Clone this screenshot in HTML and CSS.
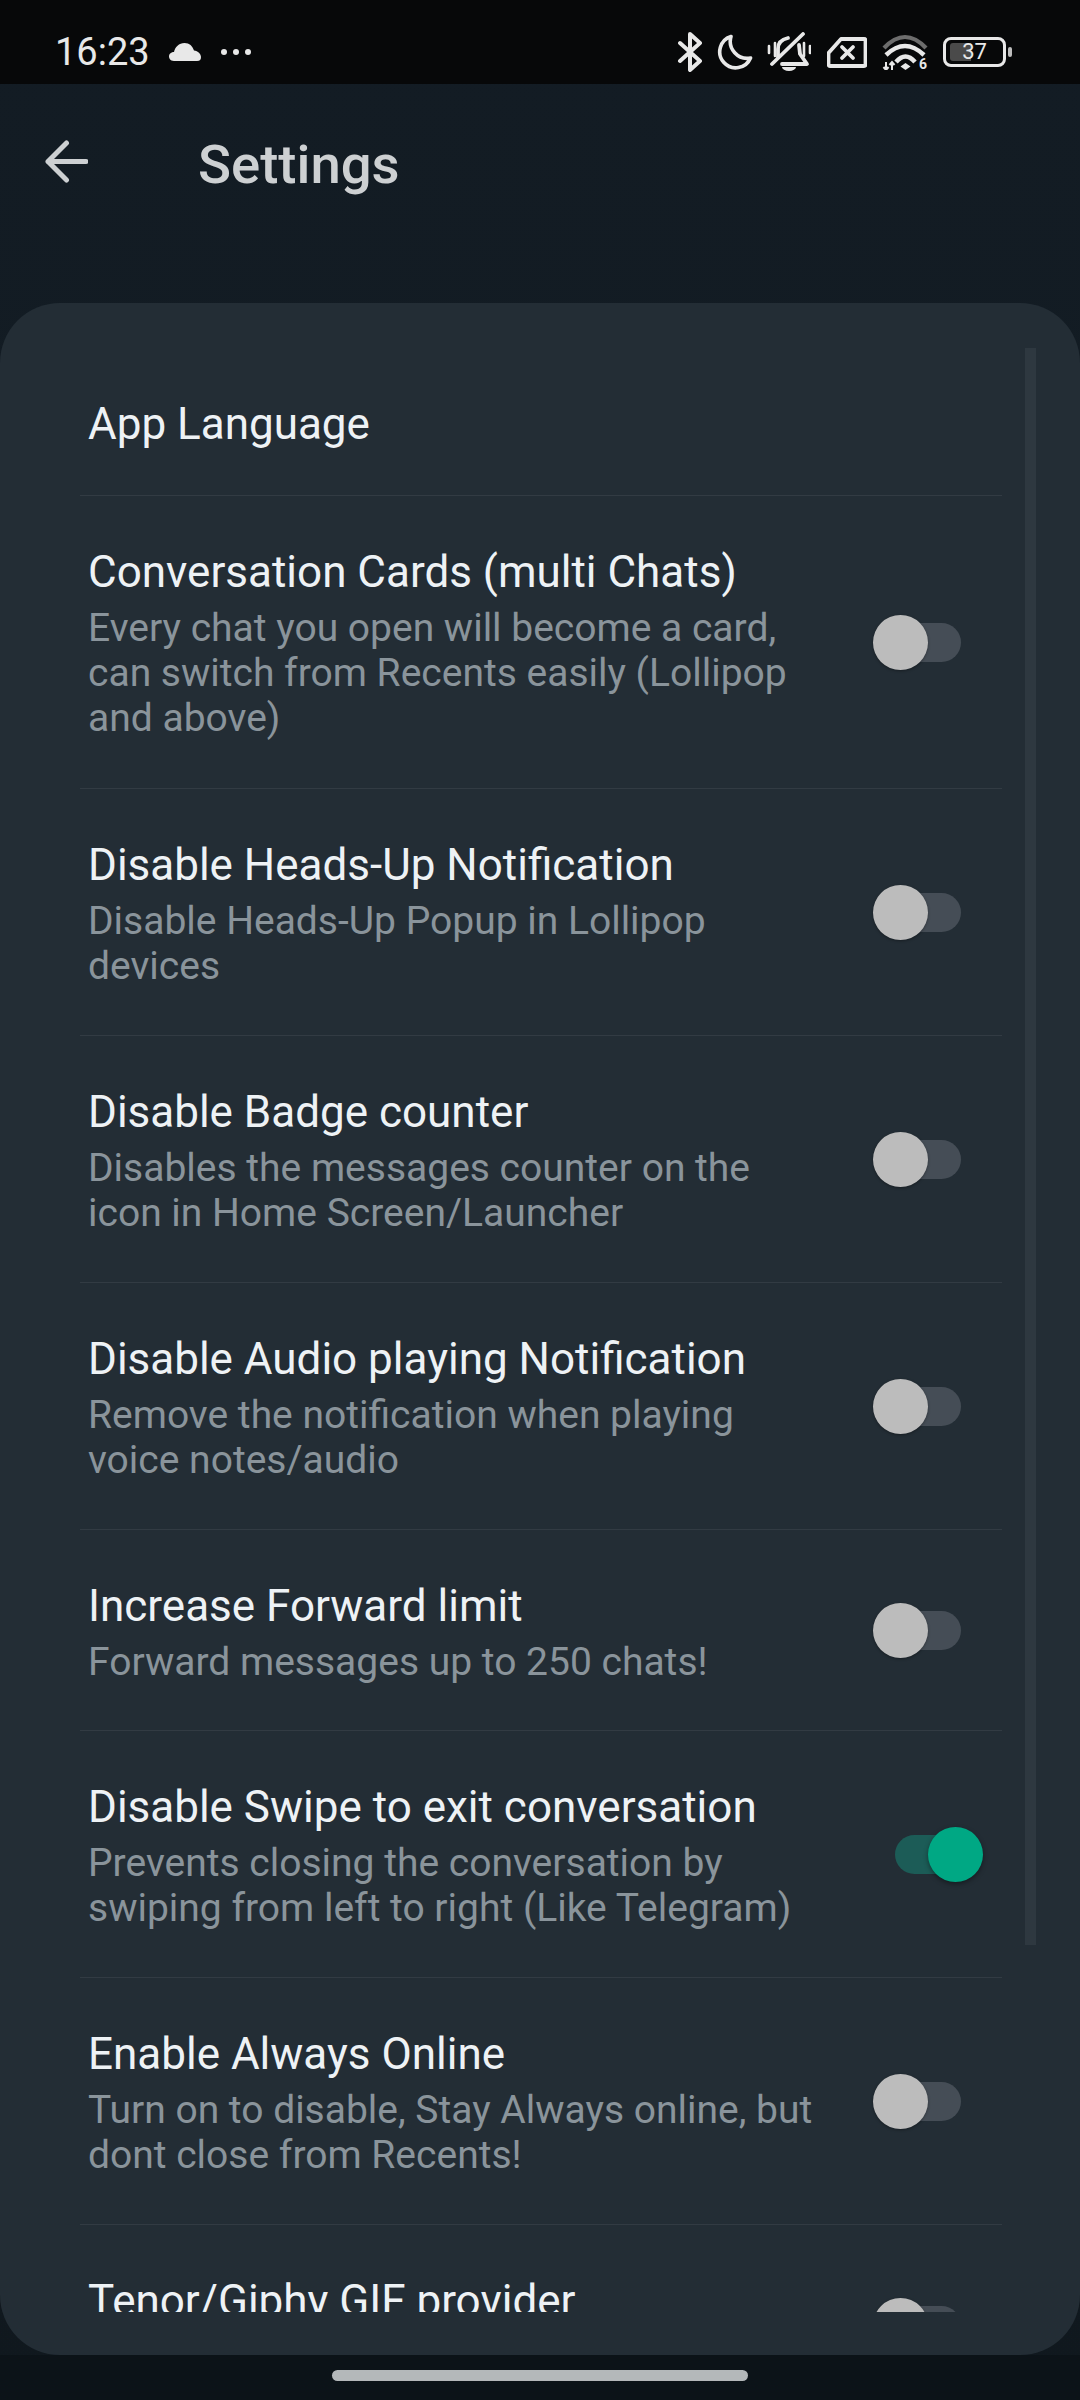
FILE: index.html
```html
<!DOCTYPE html>
<html lang="en">
<head>
<meta charset="utf-8">
<title>Settings</title>
<link rel="stylesheet" href="styles.css">
</head>
<body>
<div class="app">
  <div class="status">
    <div class="status-left">
      <span class="time">16:23</span>
      <svg class="ic-cloud" viewBox="0 0 32 18"><path d="M5 18C1 18 0 15 0 13.500C0 10.500 2.500 9 5 9C6 4 10 0 15.500 0C20.500 0 23.500 3 25 7.500C29 8 32 11 32 14C32 16.500 31 18 28 18Z" fill="#e8e8e8"/></svg>
      <svg class="ic-dots" viewBox="0 0 32 8"><circle cx="4" cy="4" r="3" fill="#e8e8e8"/><circle cx="16" cy="4" r="3" fill="#e8e8e8"/><circle cx="28" cy="4" r="3" fill="#e8e8e8"/></svg>
    </div>
    <div class="status-right">
      <svg class="ic-bt" viewBox="0 0 26 40"><path d="M3 11l20 18-10 9V2l10 9L3 29" fill="none" stroke="#e8e8e8" stroke-width="4" stroke-linejoin="round" stroke-linecap="round"/></svg>
      <svg class="ic-moon" viewBox="0 0 36 36"><path d="M14 2.500A16 16 0 1 0 33.500 24 17 17 0 0 1 14 2.500z" fill="none" stroke="#e8e8e8" stroke-width="3.600" stroke-linejoin="round"/></svg>
      <svg class="ic-bell" viewBox="0 0 44 39"><g fill="none" stroke="#e8e8e8" stroke-linecap="round"><path d="M2 14v7M8 11v13M37 11v13M43 14v7" stroke-width="2.600"/><path d="M5 32L36 2" stroke-width="3.800"/><path d="M11 25v-8Q11 8 21 6M32 13l1 9 7 10H15" stroke-width="3.800" stroke-linejoin="round"/></g><path d="M15 35h14a7 4 0 0 1-14 0z" fill="#e8e8e8"/></svg>
      <svg class="ic-sim" viewBox="0 0 40 31"><path d="M14 2h23a1.500 1.500 0 0 1 1.500 1.500v24a1.500 1.500 0 0 1-1.500 1.500H3a1.500 1.500 0 0 1-1.500-1.500V16z" fill="none" stroke="#e8e8e8" stroke-width="3.800" stroke-linejoin="round"/><path d="M15 10l11 11M26 10L15 21" stroke="#e8e8e8" stroke-width="3.800" stroke-linecap="round"/></svg>
      <svg class="ic-wifi" viewBox="0 0 46 36"><g fill="none"><path d="M2 14Q23-8 44 14" stroke="#6d6d6d" stroke-width="4.200"/><path d="M4 21Q23 3 42 21" stroke="#e8e8e8" stroke-width="4.500"/><path d="M14 28Q23.500 17 33 28" stroke="#e8e8e8" stroke-width="4.500"/></g><path d="M23.500 29l5 3.500-5 3.500-5-3.500z" fill="#e8e8e8"/><path d="M4 28v8M1.500 33l2.500 3 2.500-3M10 36v-8M7.500 31l2.500-3 2.500 3" fill="none" stroke="#e8e8e8" stroke-width="2"/><text x="37" y="35" class="wifi-six">6</text></svg>
      <div class="battery">
        <div class="battery-body"><span class="battery-fill"></span><span class="battery-num">37</span></div>
        <span class="battery-tip"></span>
      </div>
    </div>
  </div>
  <header class="bar">
    <svg class="ic-back" viewBox="0 0 43 43"><path d="M41 21.500H3M21.500 3L3 21.500 21.500 40" fill="none" stroke="#cdd0d2" stroke-width="5" stroke-linecap="round" stroke-linejoin="round"/></svg>
    <h1 class="bar-title">Settings</h1>
  </header>
  <main class="card">
    <div class="list">
      <div class="row row-plain"><div class="row-text"><div class="title">App Language</div></div></div>
      <div class="row row-3"><div class="row-text"><div class="title">Conversation Cards (multi Chats)</div><div class="sub">Every chat you open will become a card,<br>can switch from Recents easily (Lollipop<br>and above)</div></div><div class="toggle"><span class="knob"></span></div></div>
      <div class="row"><div class="row-text"><div class="title">Disable Heads-Up Notification</div><div class="sub">Disable Heads-Up Popup in Lollipop<br>devices</div></div><div class="toggle"><span class="knob"></span></div></div>
      <div class="row"><div class="row-text"><div class="title">Disable Badge counter</div><div class="sub">Disables the messages counter on the<br>icon in Home Screen/Launcher</div></div><div class="toggle"><span class="knob"></span></div></div>
      <div class="row"><div class="row-text"><div class="title">Disable Audio playing Notification</div><div class="sub">Remove the notification when playing<br>voice notes/audio</div></div><div class="toggle"><span class="knob"></span></div></div>
      <div class="row row-1"><div class="row-text"><div class="title">Increase Forward limit</div><div class="sub">Forward messages up to 250 chats!</div></div><div class="toggle"><span class="knob"></span></div></div>
      <div class="row"><div class="row-text"><div class="title">Disable Swipe to exit conversation</div><div class="sub">Prevents closing the conversation by<br>swiping from left to right (Like Telegram)</div></div><div class="toggle toggle-on"><span class="knob"></span></div></div>
      <div class="row"><div class="row-text"><div class="title">Enable Always Online</div><div class="sub">Turn on to disable, Stay Always online, but<br>dont close from Recents!</div></div><div class="toggle"><span class="knob"></span></div></div>
      <div class="row row-1"><div class="row-text"><div class="title">Tenor/Giphy GIF provider</div></div><div class="toggle"><span class="knob"></span></div></div>
    </div>
    <span class="scrollbar"></span>
  </main>
  <div class="nav"><span class="pill"></span></div>
</div>
</body>
</html>
```
FILE: styles.css
```css
* { box-sizing: border-box; }
html, body { margin: 0; padding: 0; background: #0c1318; }
body { font-family: Roboto, "Noto Sans", sans-serif; }
.app { width: 1080px; height: 2400px; display: flex; flex-direction: column; overflow: hidden; background: linear-gradient(#131c24, #121b22 50%, #10181e); }

.status { height: 84px; flex: none; background: #070809; display: flex; justify-content: space-between; align-items: center; padding: 19px 68px 0 55px; color: #e8e8e8; }
.status-left { display: flex; align-items: center; }
.time { font-size: 38px; line-height: 44px; width: 114px; }
.ic-cloud { width: 32px; height: 18px; margin-right: 19px; }
.ic-dots { width: 32px; height: 8px; }
.status-right { display: flex; align-items: center; }
.ic-bt { width: 26px; height: 40px; margin-right: 14px; }
.ic-moon { width: 36px; height: 36px; margin-right: 14px; }
.ic-bell { width: 44px; height: 39px; margin-right: 16px; }
.ic-sim { width: 40px; height: 31px; margin-right: 15px; margin-top: 2px; }
.ic-wifi { width: 46px; height: 36px; margin-right: 15px; }
.wifi-six { font-family: Roboto, sans-serif; font-size: 14px; font-weight: 700; fill: #e8e8e8; }
.battery { display: flex; align-items: center; gap: 2px; }
.battery-body { position: relative; width: 63px; height: 30px; border: 3px solid #e8e8e8; border-radius: 8px; }
.battery-fill { position: absolute; left: 4px; top: 3px; bottom: 3px; width: 21px; background: #4a4a4a; border-radius: 3px 0 0 3px; }
.battery-num { position: absolute; inset: 0; text-align: center; font-size: 22px; line-height: 24px; color: #e8e8e8; }
.battery-tip { width: 4px; height: 10px; background: #bdbdbd; border-radius: 2px; }

.bar { height: 219px; flex: none; display: flex; align-items: flex-start; padding: 56px 0 0 45px; }
.ic-back { width: 43px; height: 43px; flex: none; }
.bar-title { margin: -9px 0 0 110px; font-size: 54.500px; line-height: 66px; font-weight: 500; color: #cdd0d2; }

.card { position: relative; height: 2052px; flex: none; background: #232d35; border-radius: 60px; padding: 46px 0 43px; }
.list { height: 100%; overflow: hidden; padding: 0 78px 0 80px; }
.row { height: 247px; border-bottom: 1px solid #323b43; padding: 50px 0 0 8px; display: flex; align-items: center; position: relative; }
.row-plain { height: 147px; padding-top: 4px; padding-bottom: 0; }
.row-3 { height: 293px; }
.row-1 { height: 201px; }
.row-text { flex: 1; align-self: flex-start; }
.row-plain .row-text { align-self: center; }
.title { font-size: 44px; line-height: 52px; color: #eef2f5; }
.sub { font-size: 39px; line-height: 45px; color: #8a949b; margin-top: 8px; }
.toggle { position: absolute; left: 815px; top: calc(50% - 19px); width: 66px; height: 39px; border-radius: 20px; background: #454d56; }
.knob { position: absolute; left: -22px; top: -8px; width: 55px; height: 55px; border-radius: 50%; background: #bcbcbc; box-shadow: 0 1px 3px rgba(0,0,0,.35); }
.toggle-on { background: #1c5c57; }
.toggle-on .knob { left: 33px; background: #00a884; box-shadow: 0 2px 5px rgba(0,0,0,.4); }
.scrollbar { position: absolute; left: 1025px; top: 45px; width: 11px; height: 1597px; background: #2e3840; }

.nav { flex: 1; background: #0c1318; display: flex; justify-content: center; padding-top: 15px; }
.pill { width: 416px; height: 11px; border-radius: 6px; background: #b4b8ba; }
```
